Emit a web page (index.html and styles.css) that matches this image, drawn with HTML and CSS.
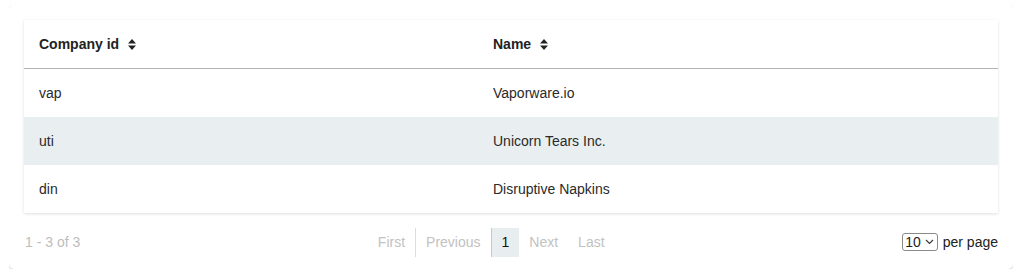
FILE: index.html
```html
<!DOCTYPE html>
<html>
<head>
<meta charset="utf-8">
<link rel="stylesheet" href="styles.css">
</head>
<body>
<div class="card">
  <table class="grid">
    <thead>
      <tr>
        <th class="col-id"><span class="th-label">Company id<svg class="sort" width="8" height="11" viewBox="0 0 8 11"><path d="M4 0 L8 4.4 L0 4.4 Z M0 6.6 L8 6.6 L4 11 Z" fill="#222"/></svg></span></th>
        <th><span class="th-label">Name<svg class="sort" width="8" height="11" viewBox="0 0 8 11"><path d="M4 0 L8 4.4 L0 4.4 Z M0 6.6 L8 6.6 L4 11 Z" fill="#222"/></svg></span></th>
      </tr>
    </thead>
    <tbody>
      <tr><td>vap</td><td>Vaporware.io</td></tr>
      <tr class="alt"><td>uti</td><td>Unicorn Tears Inc.</td></tr>
      <tr><td>din</td><td>Disruptive Napkins</td></tr>
    </tbody>
  </table>
  <div class="footer">
    <div class="count">1 - 3 of 3</div>
    <div class="pager">
      <span class="pg">First</span>
      <span class="pg sep">Previous</span>
      <span class="pg current">1</span>
      <span class="pg">Next</span>
      <span class="pg">Last</span>
    </div>
    <div class="perpage">
      <span class="select">10<svg class="chev" width="9" height="6" viewBox="0 0 9 6"><path d="M1 1 L4.5 4.5 L8 1" fill="none" stroke="#333" stroke-width="1.1"/></svg></span>
      <span>per page</span>
    </div>
  </div>
</div>
</body>
</html>
```

FILE: styles.css
```css
html, body {
  background: #fff;
}
body {
  margin: 5px 11px 0 9px;
  font-family: "Liberation Sans", Arial, Helvetica, sans-serif;
  font-size: 14px;
  color: #2a2a2a;
}
.card {
  border-radius: 5px;
  box-shadow: 0 1px 3px rgba(0, 0, 0, 0.22);
  padding: 15px 15px 0 15px;
  background: #fff;
}
.grid {
  width: 100%;
  border-collapse: collapse;
  box-shadow: 0 1px 3px rgba(0, 0, 0, 0.13);
}
.grid th {
  height: 48px;
  text-align: left;
  font-weight: bold;
  color: #222;
  padding: 0 15px;
  border-bottom: 1px solid #b4b4b4;
}
.grid .col-id {
  width: 424px;
}
.th-label {
  display: inline-flex;
  align-items: center;
  gap: 9px;
}
.grid td {
  height: 48px;
  padding: 0 15px;
  color: #2a2a2a;
}
.grid tr.alt td {
  background: #e9eff1;
}
.footer {
  display: flex;
  justify-content: space-between;
  align-items: center;
  height: 56px;
  padding-top: 2px;
  box-sizing: border-box;
}
.count {
  color: #bdbdbd;
  padding-left: 1px;
}
.pager {
  display: flex;
  align-items: stretch;
  height: 29px;
}
.pg {
  display: flex;
  align-items: center;
  padding: 0 10px;
  color: #c2c2c2;
}
.pg.sep {
  border-left: 1px solid #dcdcdc;
}
.pg.current {
  border-left: 1px solid #c8c8c8;
  background: #e8eef0;
  color: #111;
}
.perpage {
  display: flex;
  align-items: center;
  gap: 5px;
  color: #222;
}
.select {
  display: inline-flex;
  align-items: center;
  gap: 4px;
  height: 16px;
  padding: 0 3px 0 2px;
  border: 1px solid #8a8a8a;
  border-radius: 3px;
  line-height: 16px;
}
.chev {
  display: block;
}
```
